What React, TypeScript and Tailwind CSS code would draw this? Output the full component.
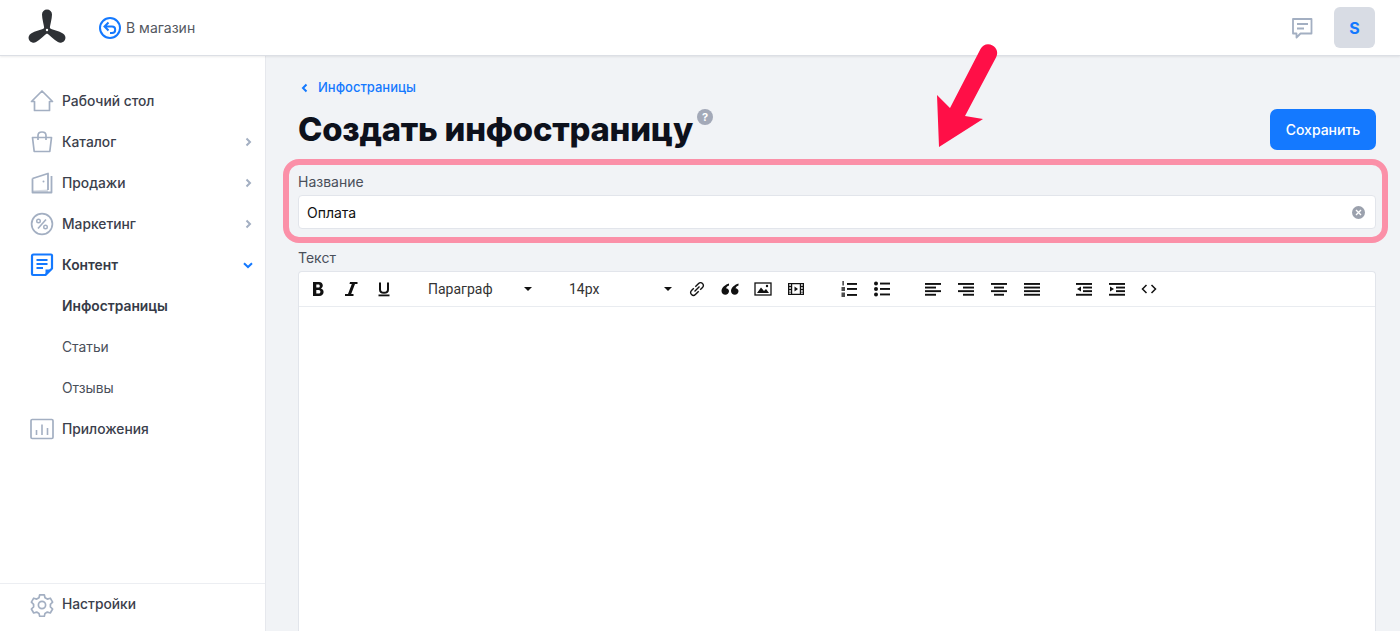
import React from "react";

const stroke = "#a3afc2";

function Svg({ size = 24, children, className = "" }: { size?: number; children: React.ReactNode; className?: string }) {
  return (
    <svg width={size} height={size} viewBox="0 0 24 24" fill="none" className={className}>
      {children}
    </svg>
  );
}

const Home = () => (
  <Svg>
    <path d="M1.500 12.500 12 2 22.500 12.500H19.500V21.500H4.500V12.500Z" stroke={stroke} strokeWidth="1.700" strokeLinejoin="round" />
  </Svg>
);
const Bag = () => (
  <Svg>
    <path d="M2.500 7.500H21.500L19.800 21.500H4.200Z" stroke={stroke} strokeWidth="1.700" strokeLinejoin="round" />
    <path d="M8 10V5.500C8 3.500 9.500 2 12 2S16 3.500 16 5.500V10" stroke={stroke} strokeWidth="1.700" />
  </Svg>
);
const Wallet = () => (
  <Svg>
    <path d="M2.500 7.500 18 2.500V19M2.500 7.500V21.500H21.500V5" stroke={stroke} strokeWidth="1.800" strokeLinejoin="round" />
    <path d="M2.500 19.500 18 18.500V21.500H2.500Z" fill={stroke} opacity=".45" />
    <circle cx="13.500" cy="10.500" r="1" fill={stroke} />
  </Svg>
);
const Percent = () => (
  <Svg>
    <circle cx="12" cy="12" r="10.400" stroke={stroke} strokeWidth="1.700" />
    <path d="M16 7.500 8 16.500" stroke={stroke} strokeWidth="1.600" />
    <circle cx="8.500" cy="9" r="1.800" stroke={stroke} strokeWidth="1.400" />
    <circle cx="15.500" cy="15" r="1.800" stroke={stroke} strokeWidth="1.400" />
  </Svg>
);
const Content = () => (
  <Svg>
    <path d="M3.500 1.500H21a1 1 0 0 1 1 1V15.500L15.500 22H3a1 1 0 0 1-1-1V3a1.500 1.500 0 0 1 1.500-1.500Z" stroke="#1479ff" strokeWidth="2.200" strokeLinejoin="round" />
    <path d="M6.500 7H17.500M6.500 11H17.500M6.500 15H13" stroke="#1479ff" strokeWidth="1.900" />
    <path d="M15.500 22V16.500H22Z" fill="#1479ff" />
  </Svg>
);
const Chart = () => (
  <Svg>
    <rect x="1" y="2.500" width="22" height="19" rx="1.200" stroke={stroke} strokeWidth="1.700" />
    <path d="M6.500 18V13M12 18V7.500M17.500 18V11" stroke={stroke} strokeWidth="1.600" />
  </Svg>
);
const Gear = () => (
  <Svg>
    <path
      d="M9.700 1.800h4.600l.7 3 2.300 1.300 3-.9 2.300 4-2.200 2.100v2.600l2.200 2.100-2.300 4-3-.9-2.300 1.300-.7 3H9.700l-.7-3-2.300-1.300-3 .9-2.300-4 2.200-2.100v-2.600L1.400 9.200l2.300-4 3 .9L9 4.800Z"
      stroke={stroke}
      strokeWidth="1.700"
      strokeLinejoin="round"
    />
    <circle cx="12" cy="12" r="3.600" stroke={stroke} strokeWidth="1.700" />
  </Svg>
);

const Chevron = ({ dir, color, w = 2 }: { dir: "r" | "d" | "l"; color: string; w?: number }) => (
  <svg width="10" height="10" viewBox="0 0 10 10" fill="none">
    <path
      d={dir === "r" ? "M3.500 1.500 7 5 3.500 8.500" : dir === "d" ? "M1 3.200 5 7 9 3.200" : "M6.500 1.500 3 5 6.500 8.500"}
      stroke={color}
      strokeWidth={w}
    />
  </svg>
);

type Item = { label: string; icon?: React.ReactNode; arrow?: "r" | "d"; bold?: boolean };
const items: Item[] = [
  { label: "Рабочий стол", icon: <Home /> },
  { label: "Каталог", icon: <Bag />, arrow: "r" },
  { label: "Продажи", icon: <Wallet />, arrow: "r" },
  { label: "Маркетинг", icon: <Percent />, arrow: "r" },
  { label: "Контент", icon: <Content />, arrow: "d", bold: true },
  { label: "Инфостраницы", bold: true },
  { label: "Статьи" },
  { label: "Отзывы" },
  { label: "Приложения", icon: <Chart /> },
];

function NavRow({ it }: { it: Item }) {
  return (
    <div className="flex h-[41px] items-center pl-[30px] pr-[12px]">
      <span className="flex w-[32px] shrink-0 items-center">{it.icon}</span>
      <span className={`flex-1 text-[13.800px] leading-[40px] ${it.bold ? "font-semibold text-[#363b47]" : it.icon ? "font-medium text-[#3b404c]" : "text-[#4a4f5a]"}`}>
        {it.label}
      </span>
      {it.arrow && <Chevron dir={it.arrow} color={it.arrow === "d" ? "#1479ff" : "#a3afc2"} />}
    </div>
  );
}

const K = "#111";
const TB = ({ children, className = "" }: { children: React.ReactNode; className?: string }) => (
  <span className={`flex h-[35px] w-[33px] shrink-0 items-center justify-center ${className}`}>{children}</span>
);
const Ico = ({ children }: { children: React.ReactNode }) => (
  <svg width="18" height="18" viewBox="0 0 18 18" fill="none">
    {children}
  </svg>
);
const Lines = ({ rows }: { rows: [number, number][] }) => (
  <>
    {rows.map(([x, w], i) => (
      <rect key={i} x={x} y={3 + i * 3.600} width={w} height="1.900" fill={K} />
    ))}
  </>
);

const Caret = () => <span className="h-0 w-0 border-x-[4px] border-t-[4px] border-x-transparent border-t-[#111]" />;

function Dropdown({ label, wide }: { label: string; wide?: boolean }) {
  return (
    <span className={`flex h-[35px] shrink-0 items-center justify-between pl-[12px] pr-[8px] text-[14px] text-[#333] [font-family:Roboto,sans-serif] ${wide ? "w-[124px]" : "w-[123px]"}`}>
      {label}
      <Caret />
    </span>
  );
}

function Toolbar() {
  return (
    <div className="flex h-[35px] items-center border-b border-[#e9ecf0] pl-[2px]">
      <TB>
        <Ico>
          <path d="M4 2H10C12.500 2 13.800 3.700 13.800 5.600 13.800 7.100 13 8.100 11.900 8.500 13.500 8.900 14.600 10.100 14.600 12 14.600 14.300 13 16 10.200 16H4ZM7.300 4.500V7.600H9.500C10.300 7.600 10.800 7 10.800 6 10.800 5.100 10.300 4.500 9.500 4.500ZM7.300 9.900V13.500H9.700C10.800 13.500 11.400 12.800 11.400 11.700 11.400 10.600 10.800 9.900 9.700 9.900Z" fill={K} fillRule="evenodd" />
        </Ico>
      </TB>
      <TB>
        <Ico>
          <path d="M8 2H15.500V4H13L9.200 14H11.500V16H3V14H6L9.800 4H7.500Z" fill={K} />
        </Ico>
      </TB>
      <TB>
        <Ico>
          <path d="M5 2.500V9.500C5 11.800 6.500 12.800 9 12.800S13 11.800 13 9.500V2.500" stroke={K} strokeWidth="2" />
          <rect x="3.500" y="14.500" width="11" height="1.800" fill={K} />
        </Ico>
      </TB>
      <span className="w-[16px] shrink-0" />
      <Dropdown label="Параграф" wide />
      <span className="w-[17px] shrink-0" />
      <Dropdown label="14px" />
      <TB>
        <Ico>
          <path d="M6.500 11.500 11.500 6.500M7.300 6.800 10.600 3.400C11.700 2.300 13.400 2.300 14.500 3.400 15.700 4.500 15.700 6.300 14.500 7.400L12.200 9.700M10.700 11.200 7.400 14.600C6.300 15.700 4.600 15.700 3.500 14.600 2.300 13.500 2.300 11.700 3.500 10.600L5.800 8.300" stroke={K} strokeWidth="1.400" />
        </Ico>
      </TB>
      <TB>
        <Ico>
          <path d="M8 3.500C4.500 4.500 .500 7.500 .500 11 .500 13 2.200 14.800 4.300 14.800 6.300 14.800 8 13.200 8 11.300 8 9.500 6.700 8.200 5 8.200 5.400 6.900 6.500 5.900 8 5.400ZM17.500 3.500C14 4.500 10 7.500 10 11 10 13 11.700 14.800 13.800 14.800 15.800 14.800 17.500 13.200 17.500 11.300 17.500 9.500 16.200 8.200 14.500 8.200 14.900 6.900 16 5.900 17.500 5.400Z" fill={K} />
        </Ico>
      </TB>
      <TB>
        <Ico>
          <rect x="1" y="3" width="16" height="12" stroke={K} strokeWidth="1.300" />
          <path d="M3 13 7 7.500 10 11 12 9 15 13Z" fill={K} />
          <circle cx="13" cy="6" r="1.200" fill={K} />
        </Ico>
      </TB>
      <TB>
        <Ico>
          <path d="M1 3H17V15H1ZM2.200 4.200V5.800H4V4.200ZM2.200 7.200V8.800H4V7.200ZM2.200 10.200V11.800H4V10.200ZM2.200 12.500V13.800H4V12.500ZM14 4.200V5.800H15.800V4.200ZM14 7.200V8.800H15.800V7.200ZM14 10.200V11.800H15.800V10.200ZM14 12.500V13.800H15.800V12.500ZM5.200 4.200V13.800H12.800V4.200Z" fill={K} fillRule="evenodd" />
          <path d="M7.500 6.500 11 9 7.500 11.500Z" fill={K} />
        </Ico>
      </TB>
      <span className="w-[20px] shrink-0" />
      <TB>
        <Ico>
          <rect x="7" y="3" width="10" height="1.900" fill={K} />
          <rect x="7" y="8" width="10" height="1.900" fill={K} />
          <rect x="7" y="14" width="10" height="1.900" fill={K} />
          <rect x="2.500" y="1" width="1.200" height="4.500" fill={K} />
          <rect x="1.500" y="7" width="3.500" height="4" fill={K} opacity=".75" />
          <rect x="1.500" y="12.500" width="3.500" height="4.500" fill={K} opacity=".75" />
        </Ico>
      </TB>
      <TB>
        <Ico>
          <circle cx="3" cy="3.500" r="2" fill={K} />
          <circle cx="3" cy="9" r="2" fill={K} />
          <circle cx="3" cy="14.500" r="2" fill={K} />
          <rect x="7" y="2.600" width="10" height="1.900" fill={K} />
          <rect x="7" y="8" width="10" height="1.900" fill={K} />
          <rect x="7" y="13.500" width="10" height="1.900" fill={K} />
        </Ico>
      </TB>
      <span className="w-[18px] shrink-0" />
      <TB><Ico><Lines rows={[[1, 16], [1, 11], [1, 16], [1, 11]]} /></Ico></TB>
      <TB><Ico><Lines rows={[[1, 16], [6, 11], [1, 16], [6, 11]]} /></Ico></TB>
      <TB><Ico><Lines rows={[[1, 16], [4, 10], [1, 16], [4, 10]]} /></Ico></TB>
      <TB><Ico><Lines rows={[[1, 16], [1, 16], [1, 16], [1, 16]]} /></Ico></TB>
      <span className="w-[19px] shrink-0" />
      <TB>
        <Ico>
          <Lines rows={[[1, 16], [8, 9], [8, 9], [1, 16]]} />
          <path d="M6 6.500V11.500L2 9Z" fill={K} />
        </Ico>
      </TB>
      <TB>
        <Ico>
          <Lines rows={[[1, 16], [8, 9], [8, 9], [1, 16]]} />
          <path d="M2 6.500V11.500L6 9Z" fill={K} />
        </Ico>
      </TB>
      <TB className="-ml-[1px]">
        <Ico>
          <path d="M6.500 5 2.500 9 6.500 13M11.500 5 15.500 9 11.500 13" stroke={K} strokeWidth="1.500" />
        </Ico>
      </TB>
    </div>
  );
}

export default function App() {
  return (
    <div className="relative flex h-[631px] w-[1400px] flex-col overflow-hidden bg-[#f1f3f6] [font-family:Inter,sans-serif]">
      <header className="relative z-10 flex h-[56px] shrink-0 items-center justify-between border-b border-[#dcdfe5] bg-white pl-[28px] pr-[25px] shadow-[0_1px_2px_rgba(0,0,0,0.08)]">
        <div className="flex items-center">
          <svg width="38" height="38" viewBox="-19 -21 38 38">
            {[0, 120, 240].map((r) => (
              <path
                key={r}
                transform={`rotate(${r})`}
                d="M-2.500 0C-3 -5 -5 -11 -5 -15.500A5 5 0 0 1 5 -15.500C5 -11 3 -5 2.500 0Z"
                fill="#2e3135"
              />
            ))}
            <circle r="3.500" fill="#2e3135" />
            <circle r="1.200" fill="#fff" />
          </svg>
          <svg width="24" height="24" viewBox="0 0 24 24" fill="none" className="ml-[32px]">
            <circle cx="12" cy="12" r="10" stroke="#1479ff" strokeWidth="2" />
            <path d="M10.500 6.500 6.500 10.500 10.500 14.500M7 10.500H14C16 10.500 17.200 12 17.200 13.700 17.200 15.500 16 17 14 17H12" stroke="#1479ff" strokeWidth="2" />
          </svg>
          <span className="ml-[4px] text-[14px] text-[#54585f]">В магазин</span>
        </div>
        <div className="flex items-center">
          <svg width="24" height="24" viewBox="0 0 24 24" fill="none" className="mr-[20px]">
            <path d="M3 3H21.500V17.500H10.500L6.500 21.500V17.500H3Z" stroke="#a3afc2" strokeWidth="1.800" strokeLinejoin="round" />
            <path d="M7 8H18M7 12.500H14" stroke="#a3afc2" strokeWidth="1.800" />
          </svg>
          <span className="flex h-[41px] w-[41px] items-center justify-center rounded-[6px] bg-[#d8dce4] text-[16px] font-bold text-[#1479ff]">S</span>
        </div>
      </header>

      <div className="flex min-h-0 flex-1">
        <aside className="flex w-[266px] shrink-0 flex-col justify-between border-r border-[#e6e8ed] bg-white pt-[24px]">
          <nav>
            {items.map((it) => (
              <NavRow key={it.label} it={it} />
            ))}
          </nav>
          <div className="flex h-[48px] items-center border-t border-[#eceef2] pb-[6px] pl-[30px]">
            <span className="flex w-[32px] items-center"><Gear /></span>
            <span className="text-[13.800px] font-medium text-[#3b404c]">Настройки</span>
          </div>
        </aside>

        <main className="flex min-w-0 flex-1 flex-col pl-[32px] pr-[24px] pt-[23px]">
          <div className="flex h-[18px] items-center gap-[8px] pl-[2px] text-[13px] font-medium text-[#1479ff]">
            <Chevron dir="l" color="#1479ff" />
            Инфостраницы
          </div>
          <div className="mt-[10px] flex h-[63px] items-start justify-between">
            <div className="flex items-start">
              <h1 className="text-[32.800px] font-extrabold leading-[44px] tracking-[-0.2px] text-[#0d111c]">Создать инфостраницу</h1>
              <span className="ml-[4px] mt-[2px] flex h-[16px] w-[16px] items-center justify-center rounded-full bg-[#a3a9b8] text-[11px] font-bold text-white">?</span>
            </div>
            <button className="mt-[2px] h-[41px] w-[106px] rounded-[7px] bg-[#1479ff] text-[14px] font-medium text-white">Сохранить</button>
          </div>
          <label className="mt-[2px] text-[14px] leading-[20px] text-[#4a4f5a]">Название</label>
          <div className="mt-[3px] flex h-[34px] items-center justify-between rounded-[4px] border border-[#e2e5eb] bg-white pl-[8px] pr-[10px] text-[14px] text-[#111]">
            Оплата
            <span className="flex h-[13px] w-[13px] items-center justify-center rounded-full bg-[#9ba1ad]">
              <svg width="7" height="7" viewBox="0 0 7 7"><path d="M1 1 6 6M6 1 1 6" stroke="#fff" strokeWidth="1.400" /></svg>
            </span>
          </div>
          <label className="mt-[19px] text-[14px] leading-[20px] text-[#4a4f5a]">Текст</label>
          <div className="mt-[3px] flex-1 rounded-t-[4px] border border-b-0 border-[#e2e5eb] bg-white">
            <Toolbar />
          </div>
        </main>
      </div>

      {/* annotation overlays */}
      <div className="pointer-events-none absolute left-[283px] top-[159px] z-20 h-[84px] w-[1105px] rounded-[16px] border-[6px] border-[#fb90a8]" />
      <svg className="pointer-events-none absolute left-0 top-0 z-20" width="1400" height="631" viewBox="0 0 1400 631">
        <path d="M939 147 937 95 950 108 980.500 49C983 44.500 988 43 992.500 45.500 997 48 998.500 53 996 57.500L965 116 983 119Z" fill="#ff0f47" />
      </svg>
    </div>
  );
}
